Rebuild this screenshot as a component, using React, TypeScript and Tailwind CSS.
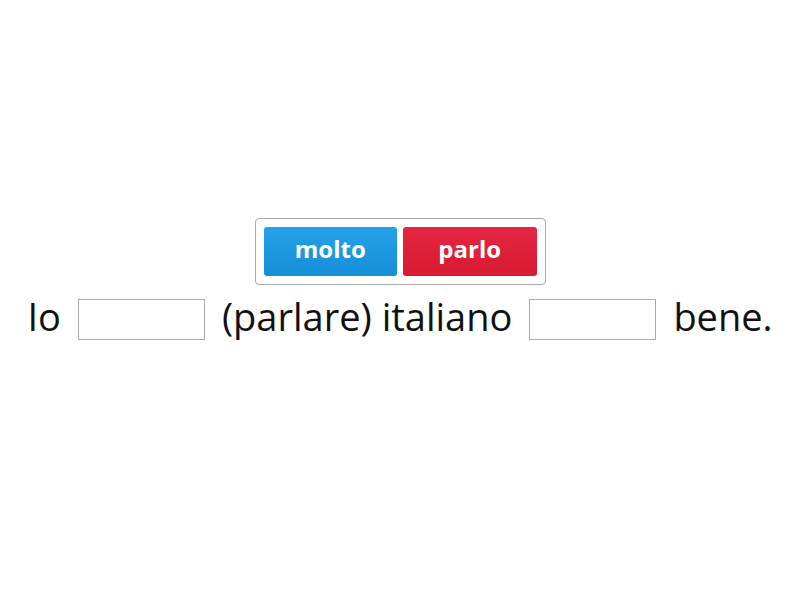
export default function App() {
  return (
    <div className="flex h-[600px] w-[800px] flex-col items-center bg-white font-['Open_Sans',sans-serif]">
      <div className="mt-[218px] flex h-[67px] w-[291px] gap-[6px] rounded-[4px] border border-[#a9a9a9] p-[8px]">
        <div className="flex flex-1 items-center justify-center rounded-[3px] bg-gradient-to-b from-[#24a2e8] to-[#168ed8] pb-[5px] text-[24px] font-bold text-white">
          molto
        </div>
        <div className="flex flex-1 items-center justify-center rounded-[3px] bg-gradient-to-b from-[#e42640] to-[#d81a32] pb-[5px] text-[24px] font-bold text-white">
          parlo
        </div>
      </div>
      <div className="mt-[12px] flex items-center whitespace-nowrap text-[38px] leading-none text-[#111]">
        <span className="mb-[7px]">Io</span>
        <span className="mx-[17px] h-[41px] w-[127px] border border-[#a9a9a9] bg-white" />
        <span className="mb-[7px]">(parlare) italiano</span>
        <span className="mx-[17px] h-[41px] w-[127px] border border-[#a9a9a9] bg-white" />
        <span className="mb-[7px]">bene.</span>
      </div>
    </div>
  );
}
